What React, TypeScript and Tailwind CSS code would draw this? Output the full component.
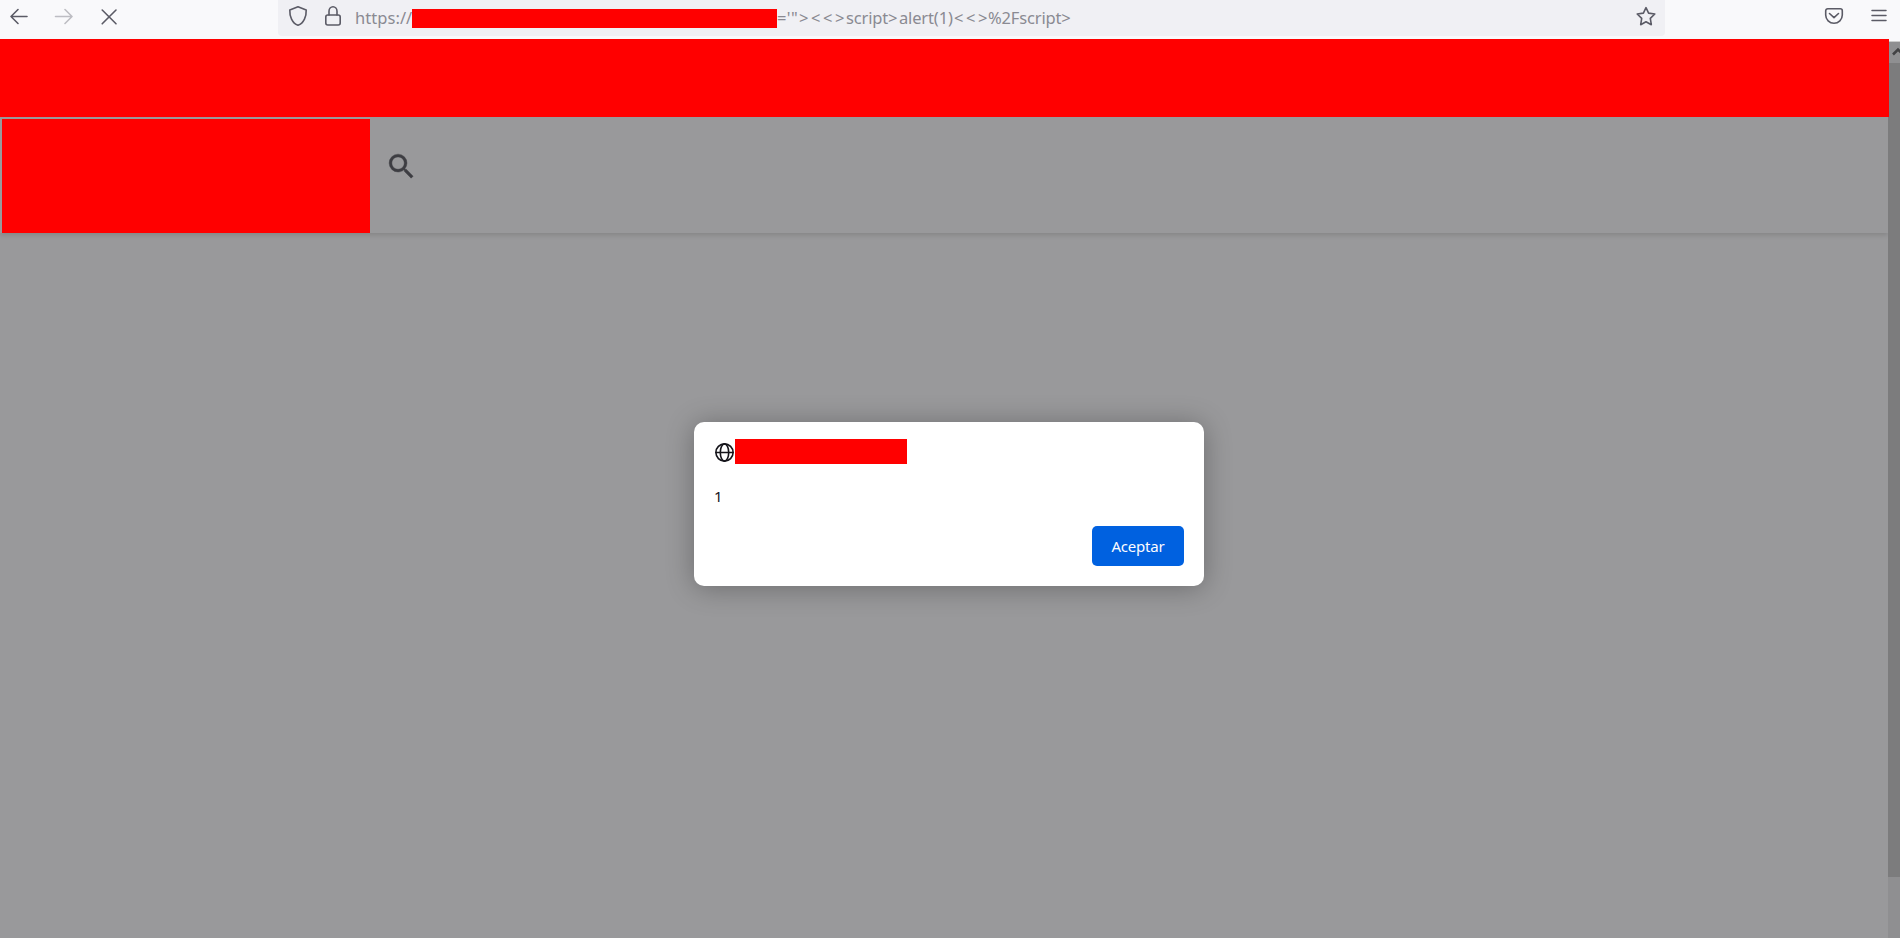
import type { ReactNode } from "react";

function Icon({ className, size, children, width = 1.6 }: { className: string; size: number; children: ReactNode; width?: number }) {
  return (
    <svg
      className={`block shrink-0 ${className}`}
      width={size}
      height={size}
      viewBox={`0 0 ${size} ${size}`}
      fill="none"
      stroke="currentColor"
      strokeWidth={width}
      strokeLinecap="round"
      strokeLinejoin="round"
      aria-hidden="true"
    >
      {children}
    </svg>
  );
}

function Toolbar() {
  return (
    <header className="flex h-[39px] items-start bg-[#f9f9fb] text-[#5b5b66]">
      <nav className="flex w-[278px] pl-2 pt-1.5">
        <Icon className="mr-[25px]" size={20}>
          <path d="M19 10.500H3M10 3.500L3 10.500L10 17.500" />
        </Icon>
        <Icon className="mr-[26px] text-[#bdbdc3]" size={20}>
          <path d="M2.500 10.500H18.500M12 3.500L19 10.500L12 17.500" />
        </Icon>
        <Icon className="" size={20}>
          <path d="M3.200 4L17 17.800M17 4L3.200 17.800" />
        </Icon>
      </nav>
      <div className="flex h-9 w-[1387px] items-start rounded-b bg-[#f0f0f4]">
        <Icon className="ml-2.5 mt-[5px]" size={22}>
          <path d="M10 1.700L18.200 5C18.500 11 16 18 10 20.300C4 18 1.500 11 1.800 5Z" />
        </Icon>
        <Icon className="ml-[13px] mt-[5px]" size={22}>
          <path d="M6 10V6.200a4 4.500 0 0 1 8 0V10" />
          <rect x="2.800" y="10" width="14.400" height="10" rx="2" />
        </Icon>
        <div className="ml-2.5 flex h-9 items-start font-['Noto_Sans',sans-serif] text-[16.500px] leading-9 tracking-[-0.15px] text-[#8a8a92]">
          <span className="w-[57px] whitespace-nowrap tracking-[0.05px]">https://</span>
          <span className="mt-[9px] h-[19px] w-[365px] bg-[#ff0000]" />
          <span className="w-[22px] whitespace-nowrap tracking-[0.4px]">='"</span>
          <span className="w-[47px] whitespace-nowrap tracking-[2.600px]">&gt;&lt;&lt;&gt;</span>
          <span className="w-[53px] whitespace-nowrap">script&gt;</span>
          <span className="w-[55px] whitespace-nowrap">alert(1)</span>
          <span className="w-[34px] whitespace-nowrap tracking-[2.500px]">&lt;&lt;&gt;</span>
          <span className="whitespace-nowrap">%2Fscript&gt;</span>
        </div>
        <Icon className="ml-auto mr-2 mt-1.5" size={22}>
          <path d="M11 1.700L13.600 7.100L19.800 8L15.300 12.400L16.300 18.700L11 15.800L5.700 18.700L6.700 12.400L2.200 8L8.400 7.100Z" />
        </Icon>
      </div>
      <div className="flex flex-1 justify-end gap-[25px] pr-[11px] pt-1.5">
        <Icon className="" size={20}>
          <path d="M3.700 2.800H16.300a2 2 0 0 1 2 2V9a8.300 8.300 0 0 1-16.600 0V4.800a2 2 0 0 1 2-2ZM5.500 7.500L10 11.700L14.500 7.500" />
        </Icon>
        <Icon className="" size={20} width={1.5}>
          <path d="M3 4.500H17M3 9.500H17M3 14.500H17" />
        </Icon>
      </div>
    </header>
  );
}

function PageScrollbar() {
  return (
    <div className="flex w-3 flex-col bg-[#8f8f91]">
      <div className="h-0.5 bg-[#f9f9fb]" />
      <div className="h-px bg-[#cccccc]" />
      <div className="flex h-[21px] items-start justify-end overflow-hidden">
        <svg width="8" height="15" viewBox="0 0 8 15" fill="none" stroke="#424244" strokeWidth="2.500" aria-hidden="true">
          <path d="M1 12.500L6 7.500L11 12.500" />
        </svg>
      </div>
      <div className="h-[814px] bg-[#7c7c7d]" />
    </div>
  );
}

function AlertDialog() {
  return (
    <section
      role="alertdialog"
      className="absolute left-[694px] top-[422px] flex h-[164px] w-[510px] flex-col rounded-[10px] bg-white px-5 pb-5 pt-[17px] text-[#15141a] shadow-[0_2px_28px_rgba(0,0,0,0.3)]"
    >
      <div className="flex h-[25px] items-start">
        <Icon className="ml-px mr-px mt-1" size={19} width={1.6}>
          <circle cx="9.500" cy="9.500" r="8.600" />
          <ellipse cx="9.500" cy="9.500" rx="4.200" ry="8.600" />
          <path d="M1 9.500H18" />
        </Icon>
        <span className="h-[25px] w-[172px] bg-[#ff0000]" />
      </div>
      <p className="mt-[22px] h-5 font-['Noto_Sans',sans-serif] text-[15px] leading-5">1</p>
      <button className="mt-auto h-10 w-[92px] self-end rounded-[5px] bg-[#0061e0] font-['Noto_Sans',sans-serif] text-[15px] leading-10 tracking-[-0.2px] text-[#fbfbfe]">
        Aceptar
      </button>
    </section>
  );
}

export default function App() {
  return (
    <div className="relative flex h-[938px] w-[1900px] flex-col overflow-hidden bg-[#99999b]">
      <Toolbar />
      <div className="flex flex-1">
        <main className="flex w-[1888px] flex-col">
          <div className="z-10 h-[78px] w-[1889px] shrink-0 bg-[#ff0000]" />
          <div className="flex h-[116px] items-start pl-0.5 pt-0.5 shadow-[0_2px_5px_rgba(0,0,0,0.14)]">
            <div className="h-[114px] w-[368px] bg-[#ff0000]" />
            <svg className="ml-[15px] mt-[31px]" width="33" height="33" viewBox="0 0 24 24" fill="#3d3d42" stroke="#3d3d42" strokeWidth="0.3" aria-hidden="true">
              <path d="M15.500 14h-.79l-.28-.27A6.470 6.470 0 0 0 16 9.500 6.500 6.500 0 1 0 9.500 16c1.610 0 3.090-.59 4.230-1.570l.27.28v.79l5 4.990L20.490 19l-4.990-5zm-6 0C7.010 14 5 11.990 5 9.500S7.010 5 9.500 5 14 7.010 14 9.500 11.990 14 9.500 14z" />
            </svg>
          </div>
        </main>
        <PageScrollbar />
      </div>
      <AlertDialog />
    </div>
  );
}
